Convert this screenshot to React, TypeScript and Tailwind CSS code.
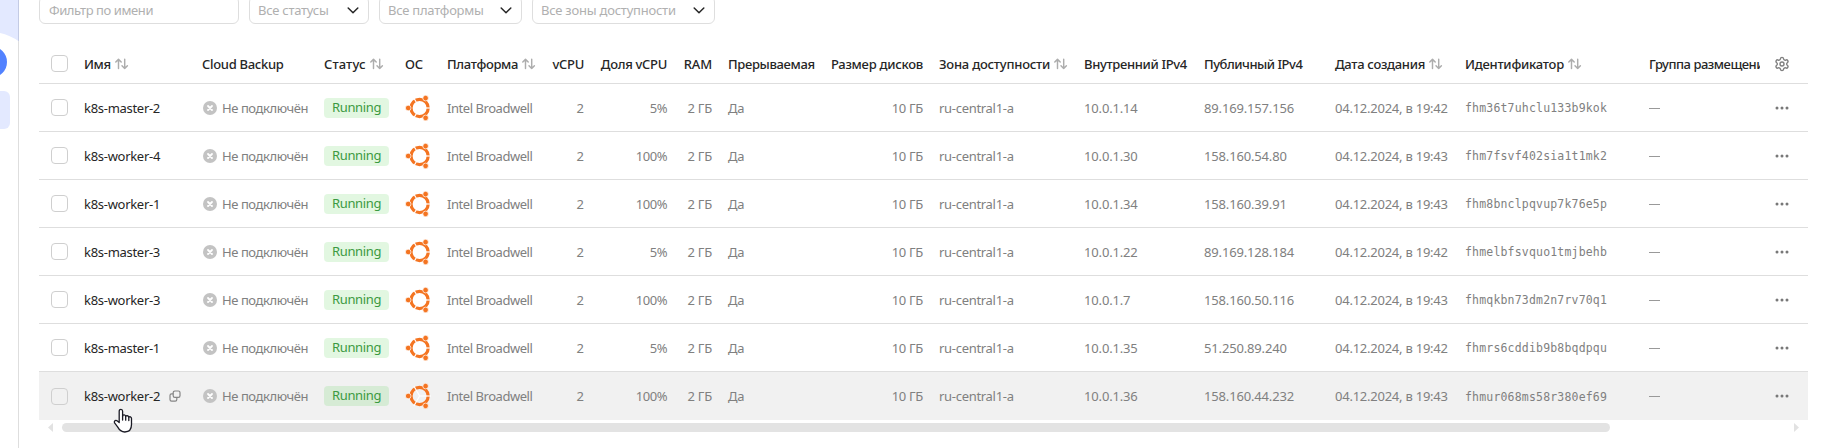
import type { ReactNode } from 'react';
import { Settings } from 'lucide-react';

type Vm = { name: string; share: string; internal: string; external: string; time: string; id: string };

const vms: Vm[] = [
  { name: 'k8s-master-2', share: '5%', internal: '10.0.1.14', external: '89.169.157.156', time: '19:42', id: 'fhm36t7uhclu133b9kok' },
  { name: 'k8s-worker-4', share: '100%', internal: '10.0.1.30', external: '158.160.54.80', time: '19:43', id: 'fhm7fsvf402sia1t1mk2' },
  { name: 'k8s-worker-1', share: '100%', internal: '10.0.1.34', external: '158.160.39.91', time: '19:43', id: 'fhm8bnclpqvup7k76e5p' },
  { name: 'k8s-master-3', share: '5%', internal: '10.0.1.22', external: '89.169.128.184', time: '19:42', id: 'fhmelbfsvquo1tmjbehb' },
  { name: 'k8s-worker-3', share: '100%', internal: '10.0.1.7', external: '158.160.50.116', time: '19:43', id: 'fhmqkbn73dm2n7rv70q1' },
  { name: 'k8s-master-1', share: '5%', internal: '10.0.1.35', external: '51.250.89.240', time: '19:42', id: 'fhmrs6cddib9b8bqdpqu' },
  { name: 'k8s-worker-2', share: '100%', internal: '10.0.1.36', external: '158.160.44.232', time: '19:43', id: 'fhmur068ms58r380ef69' },
];

const columns =
  'grid grid-cols-[37px_118px_122px_81px_42px_105px_48px_83px_45px_103px_108px_145px_120px_131px_130px_184px_119px_48px] items-center';

function SortIcon() {
  return (
    <svg className="ml-[4px] mt-px h-3 w-[14px] shrink-0" viewBox="0 0 14 12" fill="none" stroke="#adadad" strokeWidth="1.45" strokeLinecap="round" strokeLinejoin="round">
      <path d="M3.5 10.6V1.6M0.8 4.1L3.5 1.3L6.2 4.1" />
      <path d="M9.7 1.2V10.4M7 7.8L9.7 10.6L12.4 7.8" />
    </svg>
  );
}

function Chevron() {
  return (
    <svg className="h-[7px] w-3" viewBox="0 0 12 7" fill="none" stroke="#262626" strokeWidth="1.5" strokeLinecap="round" strokeLinejoin="round">
      <path d="M1.2 1L6 5.7L10.8 1" />
    </svg>
  );
}

function Ubuntu() {
  return (
    <svg className="h-[26px] w-[26px] shrink-0" viewBox="0 0 26 26">
      <circle cx="14.6" cy="13" r="8.6" fill="none" stroke="#f47421" strokeWidth="3.2" />
      <g stroke="#fff" strokeWidth="1.2">
        <path d="M14.6 13H26" />
        <path d="M14.6 13L8.85 3" />
        <path d="M14.6 13L8.85 23" />
      </g>
      <g fill="#f47421" stroke="#fff" strokeWidth="0.7">
        <circle cx="3.2" cy="13" r="2.8" />
        <circle cx="20.6" cy="3.1" r="2.8" />
        <circle cx="20.6" cy="22.9" r="2.8" />
      </g>
    </svg>
  );
}

function CrossBadge() {
  return (
    <svg className="h-[14px] w-[14px]" viewBox="0 0 14 14">
      <circle cx="7" cy="7" r="7" fill="#c3c3c3" />
      <path d="M5 5L9 9M9 5L5 9" stroke="#fff" strokeWidth="1.8" strokeLinecap="round" />
    </svg>
  );
}

function Copy() {
  return (
    <svg className="ml-[9px] h-3 w-3" viewBox="0 0 12 12" fill="none" stroke="#858585" strokeWidth="1.2">
      <rect x="4.2" y="1" width="6.8" height="6.4" rx="1.6" />
      <path d="M4.2 3.9H2.6A1.6 1.6 0 0 0 1 5.5V9.6A1.6 1.6 0 0 0 2.6 11.2H6.2A1.6 1.6 0 0 0 7.8 9.6V7.4" />
    </svg>
  );
}

function Dots() {
  return (
    <svg className="h-4 w-4" viewBox="0 0 16 16" fill="#787878">
      <circle cx="3" cy="8" r="1.5" />
      <circle cx="8" cy="8" r="1.5" />
      <circle cx="13" cy="8" r="1.5" />
    </svg>
  );
}

function Pointer() {
  return (
    <svg className="absolute left-[113px] top-[408px] h-[26px] w-5" viewBox="0 0 20 26" fill="#fff" stroke="#1a1a24" strokeWidth="1.3" strokeLinejoin="round" strokeLinecap="round">
      <path d="M6.2 14.6V3.2C6.2 0.7 9.6 0.7 9.6 3.2V8.2C9.8 6.4 12.6 6.6 12.7 8.6C13.2 7.2 15.6 7.5 15.8 9.3C16.6 8.2 18.5 8.7 18.5 10.6V16.6C18.5 20.6 16.4 24 11.8 24C7.9 24 6.4 22.2 4.6 18.9L1.4 14.7C0.9 12.8 2.8 11.6 4.4 13Z" />
      <path d="M9.6 8V12M12.7 8.8V12.2M15.8 9.6V12.6" fill="none" />
    </svg>
  );
}

function Head({ children, sort, right, tracking = 'tracking-[-0.3px]' }: { children: ReactNode; sort?: boolean; right?: boolean; tracking?: string }) {
  return (
    <div className={`flex items-center whitespace-nowrap px-2 ${tracking} ${right ? 'justify-end' : ''}`}>
      {children}
      {sort && <SortIcon />}
    </div>
  );
}

function Cell({ children, right, className = 'tracking-[-0.3px]' }: { children: ReactNode; right?: boolean; className?: string }) {
  return <div className={`flex items-center whitespace-nowrap px-2 ${right ? 'justify-end' : ''} ${className}`}>{children}</div>;
}

function Checkbox() {
  return <div className="ml-3 h-[17px] w-[17px] rounded-[4px] border border-[#cfcfcf]" />;
}

function Select({ label, className }: { label: string; className: string }) {
  return (
    <div className={`flex h-7 items-center justify-between rounded-[6px] border border-[#dedede] pl-2 pr-[9px] ${className}`}>
      <span className="whitespace-nowrap">{label}</span>
      <Chevron />
    </div>
  );
}

export default function App() {
  return (
    <div className="relative flex h-[448px] w-[1822px] overflow-hidden bg-white font-['Noto_Sans',sans-serif] text-[13px] leading-[18px] text-[#808080]">
      <aside className="h-full w-[19px] shrink-0 border-r border-[#dedede]">
        <svg className="h-[80px] w-[19px]" viewBox="0 0 19 80">
          <path d="M0 0H19V41.5Q10 35 0 33Z" fill="#e3e9ff" />
          <path d="M18.5 0V41" stroke="#c4cbe4" />
          <circle cx="-8.6" cy="62" r="15.6" fill="#5282ff" />
        </svg>
        <div className="mt-[11px] h-[38px] w-[10px] rounded-r-[6px] bg-[#e3e9ff]" />
      </aside>

      <main className="ml-5 w-[1769px] shrink-0">
        <div className="-mt-1 flex gap-[10px] text-[#b0b0b0]">
          <div className="flex h-7 w-[200px] items-center rounded-[6px] border border-[#dedede] pl-[9px] tracking-[-0.41px]">Фильтр по имени</div>
          <Select label="Все статусы" className="w-[120px] tracking-[-0.25px]" />
          <Select label="Все платформы" className="w-[143px] tracking-[-0.25px]" />
          <Select label="Все зоны доступности" className="w-[183px] tracking-[-0.23px]" />
        </div>

        <div className={`mt-[20px] h-10 border-b border-[#dedede] font-medium text-[#262626] ${columns}`}>
          <Checkbox />
          <Head sort tracking="tracking-[-0.4px]">Имя</Head>
          <Head>Cloud Backup</Head>
          <Head sort tracking="tracking-[0.1px]">Статус</Head>
          <Head>ОС</Head>
          <Head sort tracking="tracking-[-0.34px]">Платформа</Head>
          <Head right>vCPU</Head>
          <Head right tracking="tracking-[-0.3px]">Доля vCPU</Head>
          <Head right tracking="tracking-[-0.1px]">RAM</Head>
          <Head tracking="tracking-[-0.35px]">Прерываемая</Head>
          <Head right tracking="tracking-[-0.26px]">Размер дисков</Head>
          <Head sort tracking="tracking-[-0.23px]">Зона доступности</Head>
          <Head tracking="tracking-[-0.34px]">Внутренний IPv4</Head>
          <Head tracking="tracking-[-0.48px]">Публичный IPv4</Head>
          <Head sort tracking="tracking-[-0.31px]">Дата создания</Head>
          <Head sort tracking="tracking-[-0.25px]">Идентификатор</Head>
          <div className="ml-2 w-[111px] overflow-hidden whitespace-nowrap tracking-[-0.48px]">Группа размещения</div>
          <div className="pl-[14px]">
            <Settings className="h-4 w-4 text-[#808080]" strokeWidth={2.1} />
          </div>
        </div>

        {vms.map((vm, i) => (
          <div key={vm.id} className={`${columns} h-12 ${i === vms.length - 1 ? 'bg-[#f1f1f1]' : 'border-b border-[#dedede]'}`}>
            <Checkbox />
            <Cell className="tracking-[-0.29px] text-[#262626]">
              {vm.name}
              {i === vms.length - 1 && <Copy />}
            </Cell>
            <Cell className="gap-[5px] pl-[9px] tracking-[-0.43px]">
              <CrossBadge />
              Не подключён
            </Cell>
            <Cell>
              <span className="h-5 w-[65px] rounded-[4px] bg-[#3bc935]/15 pl-2 leading-[19px] tracking-[-0.35px] text-[#3b9a42]">Running</span>
            </Cell>
            <Cell>
              <Ubuntu />
            </Cell>
            <Cell className="tracking-[-0.45px]">Intel Broadwell</Cell>
            <Cell right className="tracking-normal">2</Cell>
            <Cell right className="tracking-[-0.45px]">{vm.share}</Cell>
            <Cell right className="tracking-[-0.2px]">2 ГБ</Cell>
            <Cell>Да</Cell>
            <Cell right>10 ГБ</Cell>
            <Cell>ru-central1-a</Cell>
            <Cell className="tracking-[-0.16px]">{vm.internal}</Cell>
            <Cell className="tracking-[-0.16px]">{vm.external}</Cell>
            <Cell className="tracking-[-0.24px]">04.12.2024, в {vm.time}</Cell>
            <Cell className="pt-px font-['DejaVu_Sans_Mono',monospace] text-[11.5px] tracking-[0.18px]">{vm.id}</Cell>
            <Cell className="pt-px">
              <span className="h-px w-[11px] bg-[#999999]" />
            </Cell>
            <div className="pl-[14px]">
              <Dots />
            </div>
          </div>
        ))}

        <div className="mt-[3px] flex h-[9px] items-center">
          <svg className="ml-[9px] h-[9px] w-[5px]" viewBox="0 0 5 9" fill="#e2e2e2"><path d="M5 0V9L0 4.5Z" /></svg>
          <div className="ml-[9px] h-[9px] w-[1548px] rounded-full bg-[#e3e3e3]" />
          <svg className="ml-auto mr-[9px] h-[9px] w-[5px]" viewBox="0 0 5 9" fill="#e2e2e2"><path d="M0 0V9L5 4.5Z" /></svg>
        </div>
      </main>
      <Pointer />
    </div>
  );
}
